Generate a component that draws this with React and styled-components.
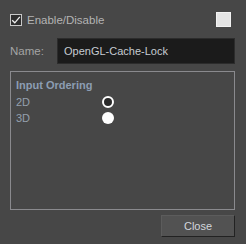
import React from "react";
import styled, { createGlobalStyle } from "styled-components";

const Global = createGlobalStyle`
  html, body {
    margin: 0;
    padding: 0;
    background: #474747;
  }
  * {
    box-sizing: border-box;
  }
`;

const Dialog = styled.div`
  width: 246px;
  height: 244px;
  background: #474747;
  padding: 11px 11px 0 10px;
  display: flex;
  flex-direction: column;
  font-family: "Liberation Sans", Arial, sans-serif;
  font-size: 11px;
  color: #b0b0b0;
`;

const TopRow = styled.div`
  display: flex;
  align-items: center;
  height: 17px;
`;

const Check = styled.span`
  width: 12px;
  height: 12px;
  border: 1px solid #c8c8c8;
  background: #2e2e2e;
  display: flex;
  align-items: center;
  justify-content: center;
  margin-top: 1px;
`;

const CheckLabel = styled.span`
  margin-left: 5px;
  font-size: 11.5px;
  color: #b4b4b4;
  flex: 1;
`;

const Swatch = styled.span`
  width: 15px;
  height: 15px;
  background: #e4e4e4;
  border: 1px solid #f2f2f2;
  margin-right: 4px;
`;

const NameRow = styled.div`
  display: flex;
  align-items: center;
  margin-top: 10px;
`;

const Label = styled.span`
  width: 47px;
  font-size: 11.5px;
  color: #a4a4a4;
`;

const Input = styled.div`
  flex: 1;
  height: 26px;
  background: #1b1b1b;
  border: 1px solid #2c2c2c;
  padding-left: 6px;
  display: flex;
  align-items: center;
  font-size: 11px;
  color: #c6cbd2;
`;

const Group = styled.div`
  margin-top: 7px;
  height: 139px;
  border: 1px solid #8a8a8e;
  padding: 6px 0 0 5px;
`;

const GroupTitle = styled.div`
  font-weight: bold;
  font-size: 11px;
  color: #8c9db3;
  height: 16px;
  line-height: 14px;
`;

const OptionRow = styled.div`
  display: flex;
  align-items: center;
  height: 16px;
  color: #95a0ae;
`;

const OptionName = styled.span`
  width: 86px;
`;

const Radio = styled.span`
  width: 12px;
  height: 12px;
  border-radius: 50%;
  background: ${(p) => (p.hollow ? "#2a2a2a" : "#ffffff")};
  border: ${(p) => (p.hollow ? "2.5px solid #ffffff" : "none")};
`;

const Footer = styled.div`
  display: flex;
  justify-content: flex-end;
  margin-top: 5px;
`;

const Button = styled.button`
  width: 74px;
  height: 22px;
  background: #525252;
  border: 1px solid #5c5c5c;
  border-right-color: #222;
  border-bottom-color: #222;
  color: #d2d6dc;
  font-family: "Liberation Sans", Arial, sans-serif;
  font-size: 11px;
  padding: 0;
`;

function App() {
  const options = [
    { name: "2D", hollow: true },
    { name: "3D", hollow: false },
  ];

  return (
    <Dialog>
      <Global />
      <TopRow>
        <Check>
          <svg width="10" height="10" viewBox="0 0 10 10">
            <path d="M1.2 5.2 L3.8 7.8 L8.8 1.8" fill="none" stroke="#f0f0f0" strokeWidth="1.3" />
          </svg>
        </Check>
        <CheckLabel>Enable/Disable</CheckLabel>
        <Swatch />
      </TopRow>
      <NameRow>
        <Label>Name:</Label>
        <Input>OpenGL-Cache-Lock</Input>
      </NameRow>
      <Group>
        <GroupTitle>Input Ordering</GroupTitle>
        {options.map((o) => (
          <OptionRow key={o.name}>
            <OptionName>{o.name}</OptionName>
            <Radio hollow={o.hollow} />
          </OptionRow>
        ))}
      </Group>
      <Footer>
        <Button>Close</Button>
      </Footer>
    </Dialog>
  );
}

export default App;
